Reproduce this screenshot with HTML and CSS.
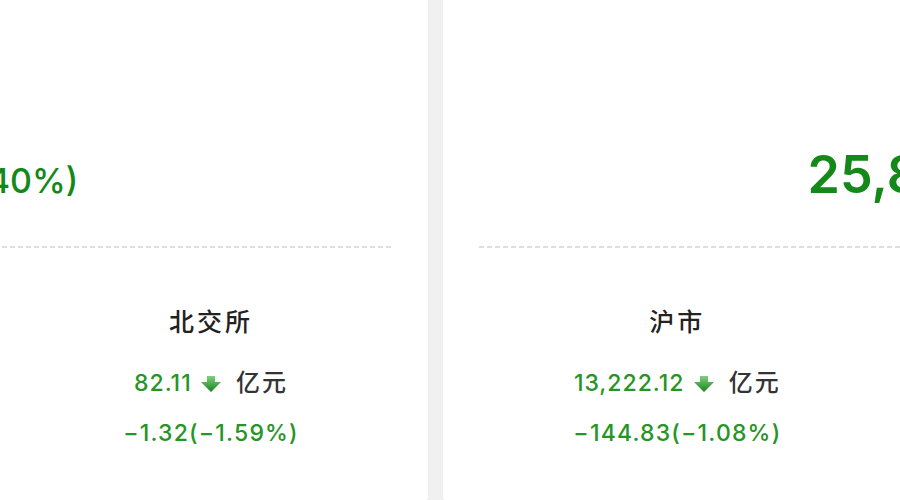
FILE: index.html
```html
<!DOCTYPE html>
<html lang="zh-CN">
<head>
    <meta charset="UTF-8">
    <meta name="viewport" content="width=device-width, initial-scale=1.0">
    <title>成交额</title>
    <link rel="stylesheet" href="styles.css">
</head>
<body>
    <div class="board">
        <!-- 昨日成交 -->
        <section class="card card-prev">
            <div class="hero">
                <span class="hero-value">231.58</span>
                <span class="hero-change">−372.16(−1.40%)</span>
            </div>
            <div class="divider"></div>
            <div class="markets">
                <div class="market">
                    <h3>沪市</h3>
                    <p class="market-value">13,366.95 <svg class="arrow" viewBox="0 0 20 16"><use href="#down"/></svg> <span class="unit">亿元</span></p>
                    <p class="market-change">−158.40(−1.17%)</p>
                </div>
                <div class="market">
                    <h3>深市</h3>
                    <p class="market-value">12,781.20 <svg class="arrow" viewBox="0 0 20 16"><use href="#down"/></svg> <span class="unit">亿元</span></p>
                    <p class="market-change">−212.44(−1.63%)</p>
                </div>
                <div class="market">
                    <h3>北交所</h3>
                    <p class="market-value">82.11 <svg class="arrow" viewBox="0 0 20 16"><use href="#down"/></svg> <span class="unit">亿元</span></p>
                    <p class="market-change">−1.32(−1.59%)</p>
                </div>
            </div>
        </section>

        <!-- 今日成交 -->
        <section class="card card-today">
            <div class="hero">
                <span class="hero-value">25,859.42</span>
                <span class="hero-change">−72.16(−0.28%)</span>
            </div>
            <div class="divider"></div>
            <div class="markets">
                <div class="market">
                    <h3>沪市</h3>
                    <p class="market-value">13,222.12 <svg class="arrow" viewBox="0 0 20 16"><use href="#down"/></svg> <span class="unit">亿元</span></p>
                    <p class="market-change">−144.83(−1.08%)</p>
                </div>
                <div class="market">
                    <h3>深市</h3>
                    <p class="market-value">12,556.49 <svg class="arrow" viewBox="0 0 20 16"><use href="#down"/></svg> <span class="unit">亿元</span></p>
                    <p class="market-change">−224.71(−1.76%)</p>
                </div>
                <div class="market">
                    <h3>北交所</h3>
                    <p class="market-value">80.81 <svg class="arrow" viewBox="0 0 20 16"><use href="#down"/></svg> <span class="unit">亿元</span></p>
                    <p class="market-change">−1.30(−1.58%)</p>
                </div>
            </div>
        </section>
    </div>

    <!-- shared down arrow -->
    <svg class="defs" width="0" height="0">
        <defs>
            <linearGradient id="downFill" x1="0" y1="0" x2="0" y2="1">
                <stop offset="0" stop-color="#7fd07f"/>
                <stop offset="1" stop-color="#17851a"/>
            </linearGradient>
            <path id="down" d="M6 0h8v6h6l-10 10l-10-10h6z" fill="url(#downFill)"/>
        </defs>
    </svg>
</body>
</html>
```

FILE: styles.css
```css
/* Page */
body {
    margin: 0;
    background: #f0f0f0;
    width: 900px;
    height: 500px;
    overflow: hidden;
    font-family: Inter, "Liberation Sans", "Noto Sans CJK SC", sans-serif;
}

.board {
    display: flex;
    gap: 15px;
    margin-top: -20px;
    margin-left: -730px;
}

.card {
    flex: none;
    background: #fff;
    border-radius: 8px;
    padding: 165px 36px 54px;
    box-sizing: border-box;
}

.card-prev {
    width: 1158px;
}

.card-today {
    width: 1262px;
}

/* Big total */
.hero {
    display: flex;
    justify-content: center;
    align-items: baseline;
    gap: 12px;
    line-height: 60px;
    color: #14891a;
}

.hero-value {
    font-size: 52px;
    font-weight: 600;
}

.hero-change {
    font-size: 34px;
    font-weight: 500;
}

.divider {
    margin-top: 35px;
    height: 2px;
    background: repeating-linear-gradient(to right, #dedede 0 5px, transparent 5px 8px);
}

/* Per-market stats */
.markets {
    display: grid;
    grid-template-columns: repeat(3, 1fr);
}

.market {
    text-align: center;
}

.market h3 {
    margin: 55px 0 0;
    font-family: "Noto Sans CJK SC", sans-serif;
    font-size: 25px;
    font-weight: 500;
    line-height: 34px;
    letter-spacing: 3px;
    color: #222;
}

.market-value,
.market-change {
    margin: 0;
    font-size: 23px;
    font-weight: 500;
    line-height: 34px;
    color: #259525;
}

.market-value {
    margin-top: 27px;
    letter-spacing: 1px;
}

.market-change {
    margin-top: 16px;
    letter-spacing: 1.2px;
}

.arrow {
    width: 20px;
    height: 16px;
    vertical-align: -1px;
    margin: 0 8px 0 2px;
}

.unit {
    font-family: "Noto Sans CJK SC", sans-serif;
    font-size: 24px;
    letter-spacing: 2px;
    color: #333;
}

.defs {
    position: absolute;
}
```
